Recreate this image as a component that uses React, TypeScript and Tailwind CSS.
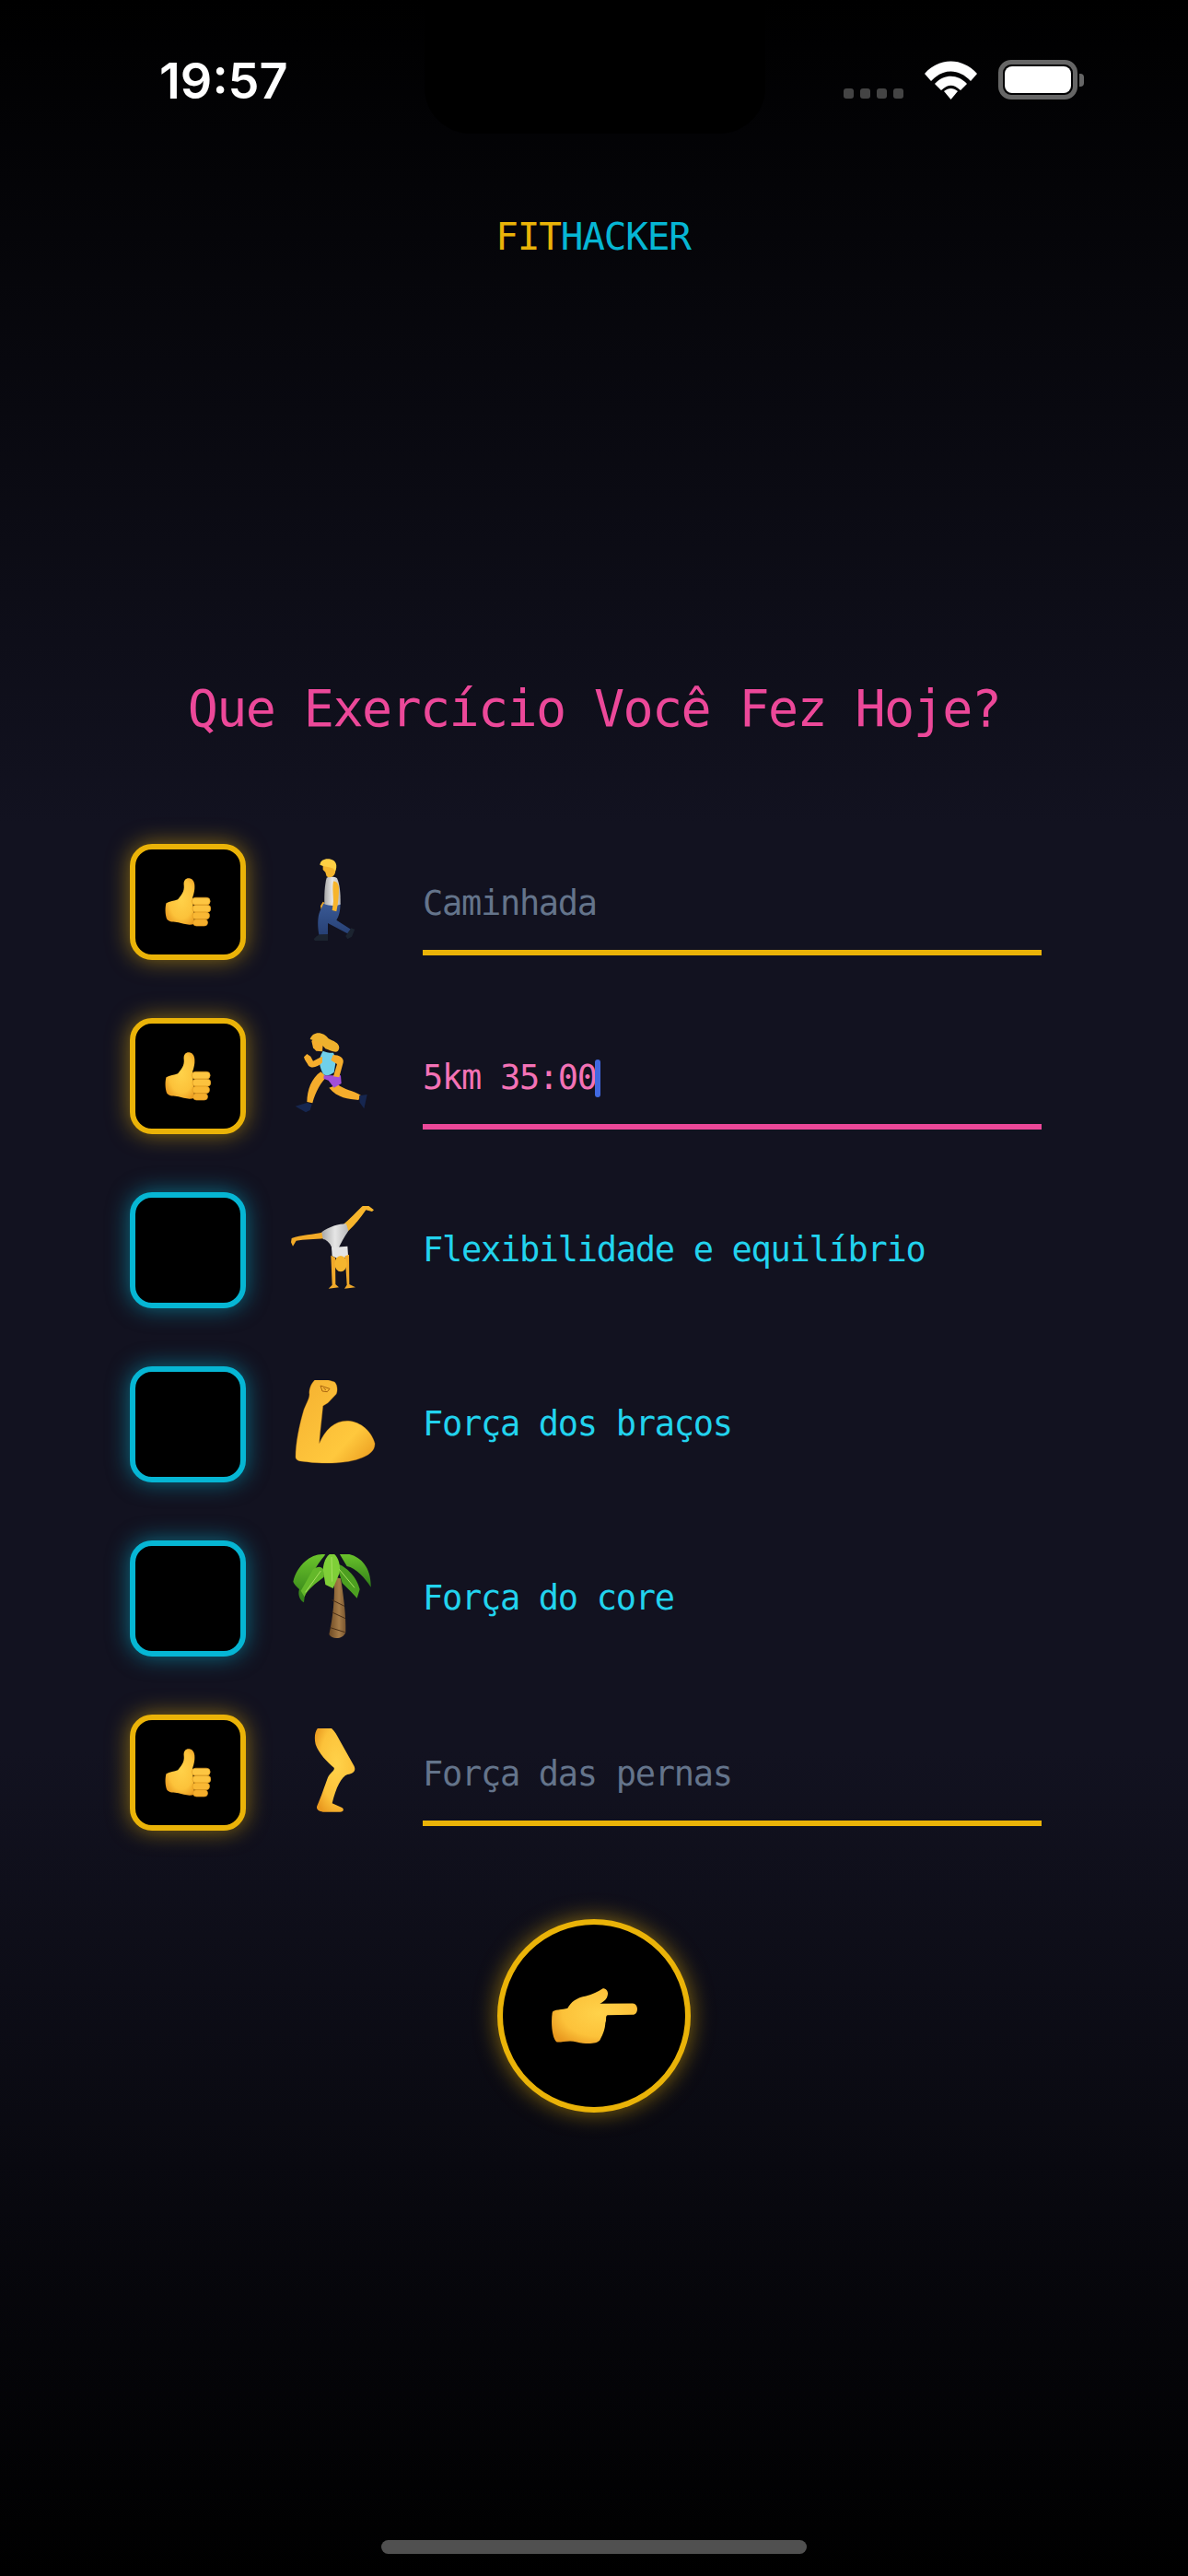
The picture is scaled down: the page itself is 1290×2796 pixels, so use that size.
const mono = "font-['DejaVu_Sans_Mono',monospace]";

function Defs() {
  return (
    <svg width="0" height="0" className="absolute">
      <defs>
        <radialGradient id="skin" cx="0.55" cy="0.45" r="0.65">
          <stop offset="0" stopColor="#ffd24a" />
          <stop offset="0.65" stopColor="#fcc23a" />
          <stop offset="1" stopColor="#e9991f" />
        </radialGradient>
        <linearGradient id="arm" x1="0" y1="0" x2="1" y2="1">
          <stop offset="0" stopColor="#f5b030" />
          <stop offset="0.7" stopColor="#ffc83d" />
          <stop offset="1" stopColor="#e8981c" />
        </linearGradient>
        <linearGradient id="trunk" x1="0" y1="0" x2="1" y2="0">
          <stop offset="0" stopColor="#6e4a24" />
          <stop offset="0.6" stopColor="#a67c48" />
          <stop offset="1" stopColor="#7a5630" />
        </linearGradient>
        <linearGradient id="leaf" x1="0" y1="0" x2="0" y2="1">
          <stop offset="0" stopColor="#6cc52c" />
          <stop offset="1" stopColor="#2f7d18" />
        </linearGradient>
        <linearGradient id="tee" x1="0" y1="0" x2="1" y2="0">
          <stop offset="0" stopColor="#a8a8a8" />
          <stop offset="0.5" stopColor="#e6e6e6" />
          <stop offset="1" stopColor="#b8b8b8" />
        </linearGradient>
        <linearGradient id="jeans" x1="0" y1="0" x2="0" y2="1">
          <stop offset="0" stopColor="#3a5a96" />
          <stop offset="1" stopColor="#263f73" />
        </linearGradient>
      </defs>
    </svg>
  );
}

// all drawings below are in 1/3 px units, 3x the size on screen
function Thumb() {
  return (
    <svg viewBox="0 0 150 160" className="w-[50px] h-[53px]">
      <path d="M4 82 C14 76 32 74 42 70 C54 56 64 44 62 24 C60 8 68 0 80 1 C94 3 99 18 97 36 C96 48 92 58 90 66 L96 150 C80 157 60 150 44 146 C30 142 14 146 6 134 C0 118 0 96 4 82Z" fill="url(#skin)" />
      <rect x="88" y="64" width="60" height="24" rx="12" fill="#fdc642" stroke="#e09a20" strokeWidth="2" />
      <rect x="90" y="88" width="60" height="24" rx="12" fill="#fcc23e" stroke="#e09a20" strokeWidth="2" />
      <rect x="90" y="112" width="56" height="23" rx="11" fill="#f9b834" stroke="#e09a20" strokeWidth="2" />
      <rect x="92" y="135" width="48" height="22" rx="11" fill="#f5ae2c" stroke="#e09a20" strokeWidth="2" />
    </svg>
  );
}

function Walker() {
  return (
    <svg viewBox="585 93 288 288" className="w-[96px] h-[96px]">
      <path d="M684 250 L692 236 L698 240 L692 262 L686 262Z" fill="#eeaa2a" />
      <path d="M694 242 L748 240 C750 262 744 285 736 296 L783 326 L772 340 L708 306 L708 348 L680 348 C674 320 674 285 682 268Z" fill="url(#jeans)" />
      <path d="M662 358 C668 350 676 346 680 343 L708 342 L708 363 L666 363Z" fill="#1c2430" />
      <path d="M766 348 L784 322 L796 326 L786 350 L772 358Z" fill="#1c2430" />
      <path d="M704 158 C715 152 732 154 738 160 C746 175 750 210 749 245 C735 250 712 250 697 244 C696 210 698 180 704 158Z" fill="url(#tee)" />
      <path d="M726 170 C736 168 744 180 744 192 C744 215 742 240 736 268 L722 264 L726 235 C726 215 722 190 726 170Z" fill="#f7b52c" />
      <path d="M692 118 L734 120 L732 142 C728 158 712 160 704 154 L700 140 L692 132Z" fill="#f5b52e" />
      <path d="M682 116 C684 100 700 94 718 98 C736 102 740 120 732 138 L726 128 C712 122 695 122 682 116Z" fill="#ffd044" />
    </svg>
  );
}

function Runner() {
  return (
    <svg viewBox="585 660 288 288" className="w-[96px] h-[96px]">
      <path d="M704 806 C686 825 668 852 658 892 L640 888 C640 850 655 810 685 790Z" fill="#f5ad2c" />
      <path d="M740 832 C762 848 790 852 815 866 L808 882 C775 878 740 876 712 842Z" fill="#f5ad2c" />
      <path d="M602 902 L642 890 L656 896 L650 915 L636 922 Z" fill="#16264f" />
      <path d="M810 868 L836 864 L826 910 L812 890Z" fill="#16264f" />
      <path d="M695 802 L750 802 L752 828 L728 842 L710 818 L694 812Z" fill="#a24fd8" />
      <path d="M692 722 C700 726 718 730 726 728 L735 750 L728 792 C715 802 700 806 692 796 C680 770 675 750 692 722Z" fill="#6fd0ea" />
      <path d="M690 760 C675 775 655 780 645 770 C640 760 632 752 630 742 L640 732 L652 740 L660 755 L680 745 L690 740Z" fill="#f5ad2c" />
      <path d="M725 735 C745 735 762 745 758 760 L745 808 L726 805 L738 765 L718 752Z" fill="#f5ad2c" />
      <path d="M655 690 C662 680 685 680 692 700 L690 724 L670 722 L660 712Z" fill="#f5ad2c" />
      <path d="M650 684 C660 655 695 660 710 682 C725 690 745 695 745 712 C742 735 720 722 700 715 C690 700 670 690 650 684Z" fill="#eeb12d" />
    </svg>
  );
}

function Cartwheel() {
  return (
    <svg viewBox="585 87 288 288" className="w-[96px] h-[96px]">
      <path d="M590 192 C620 182 660 180 695 172 L698 192 C665 196 630 196 605 200 L594 218 L588 205Z" fill="#f2aa28" />
      <path d="M755 150 C780 130 800 108 820 88 L835 82 L858 100 L852 105 L832 100 C815 125 795 150 775 168Z" fill="#f7b52c" />
      <path d="M688 172 C710 155 745 145 768 145 L775 168 C760 190 750 210 742 225 L722 225 C715 205 700 195 692 195Z" fill="url(#tee)" />
      <path d="M720 222 L772 218 L774 250 L748 262 L722 250Z" fill="#e4e4e4" />
      <path d="M718 248 L732 255 L733 342 L744 352 L710 356 L722 344Z" fill="#f0a92a" />
      <path d="M764 250 L777 245 L778 342 L798 352 L762 356 L770 344Z" fill="#f0a92a" />
      <ellipse cx="750" cy="275" rx="20" ry="26" fill="#f5b52e" />
    </svg>
  );
}

function Arm() {
  return (
    <svg viewBox="585 654 288 288" className="w-[96px] h-[96px]">
      <path d="M680 645 L730 660 C740 670 740 690 735 700 L708 728 L692 738 C688 780 682 830 680 860 C700 815 730 785 775 787 C815 790 850 820 861 860 C862 885 840 900 810 910 C770 925 700 928 640 920 C620 918 605 918 603 905 C603 860 615 800 630 750 C640 725 648 715 648 700 C645 680 660 650 680 645Z" fill="url(#arm)" stroke="#dd9118" strokeWidth="1" />
      <path d="M684 672 L714 682 L706 692 L690 690Z M694 680 L702 686" fill="none" stroke="#a86410" strokeWidth="3" />
    </svg>
  );
}

function Palm() {
  return (
    <svg viewBox="585 111 288 288" className="w-[96px] h-[96px]">
      <path d="M728 185 L750 190 C758 240 768 310 766 365 C758 388 722 390 712 372 C724 320 732 250 728 185Z" fill="url(#trunk)" />
      <path d="M722 260 L762 280 M722 300 L765 320 M716 350 L764 365" stroke="#4a2f16" strokeWidth="3" fill="none" />
      <path d="M595 200 C610 140 660 105 700 112 C670 150 640 190 630 268 C615 260 610 240 615 225 C605 215 598 208 595 200Z" fill="url(#leaf)" />
      <path d="M745 108 C800 105 850 140 848 218 C830 190 800 155 770 150Z" fill="url(#leaf)" />
      <path d="M735 140 C770 150 805 190 812 225 L803 254 L785 235 L755 205Z" fill="#4c9f20" />
      <path d="M660 160 C680 145 700 150 695 185 C670 205 640 225 632 250 L620 230 Z" fill="#64b82a" />
      <path d="M722 105 C745 120 750 150 745 175 L725 222 L700 210 L692 160 C695 130 705 115 722 105Z" fill="#7fcf38" />
      <path d="M720 120 L722 200 M745 160 L795 220 M685 165 L635 235" stroke="#a8e060" strokeWidth="3" fill="none" />
    </svg>
  );
}

function Leg() {
  return (
    <svg viewBox="585 678 288 288" className="w-[96px] h-[96px]">
      <path d="M695 668 C718 668 732 688 747 718 L792 798 C802 815 792 826 772 828 C752 834 734 872 722 922 L754 936 C763 942 758 950 748 950 L692 950 C676 948 668 940 674 928 C686 902 698 864 708 838 C716 822 732 814 728 806 C706 788 678 760 668 730 C660 695 672 668 695 668Z" fill="url(#skin)" />
    </svg>
  );
}

function Pointer() {
  return (
    <svg viewBox="285 312 285 188" className="w-[95px] h-[63px]">
      <path d="M290 395 C292 382 325 386 340 380 C350 360 370 345 400 340 C420 335 440 325 455 315 C470 315 475 330 468 345 C462 356 450 362 445 365 L552 364 C572 365 572 400 552 401 L470 402 C462 405 468 415 463 428 C462 445 458 460 445 484 C435 497 400 497 370 490 C345 482 320 492 305 490 C290 480 285 430 290 395Z" fill="url(#skin)" />
    </svg>
  );
}

function Wifi() {
  return (
    <svg viewBox="0 0 57 42" className="w-[57px] h-[42px]">
      <path d="M0 14 C16 -4 41 -4 57 14 L50 22 C37 8 20 8 7 22Z" fill="#fff" />
      <path d="M11 25 C21 14 36 14 46 25 L39 32 C31 25 26 25 18 32Z" fill="#fff" />
      <path d="M21 33 C26 29 31 29 36 33 L28.5 42Z" fill="#fff" />
    </svg>
  );
}

type Item = { icon: React.ReactNode; label: string; done?: boolean; focus?: boolean };

const items: Item[] = [
  { icon: <Walker />, label: 'Caminhada', done: true },
  { icon: <Runner />, label: '5km 35:00', done: true, focus: true },
  { icon: <Cartwheel />, label: 'Flexibilidade e equilíbrio' },
  { icon: <Arm />, label: 'Força dos braços' },
  { icon: <Palm />, label: 'Força do core' },
  { icon: <Leg />, label: 'Força das pernas', done: true },
];

function Row({ item }: { item: Item }) {
  return (
    <div className="flex items-center gap-[48px] w-[990px]">
      {item.done ? (
        <div className="w-[126px] h-[126px] flex items-center justify-center rounded-[24px] border-[6px] border-[#eab308] bg-black shadow-[0_0_24px_#eab30890]">
          <Thumb />
        </div>
      ) : (
        <div className="w-[126px] h-[126px] rounded-[24px] border-[6px] border-[#06b6d4] bg-black shadow-[0_0_24px_#06b6d490]" />
      )}
      {item.icon}
      {item.done ? (
        <div className="flex-1 h-[126px] flex items-end pb-[5px]">
          <div className={`w-full h-[106px] flex items-center border-b-[6px] ${item.focus ? 'border-[#ec4899] text-[#f472b6]' : 'border-[#eab308] text-[#64748b]'}`}>
            <span className="text-[37px] tracking-[-1.3px]">{item.label}</span>
            {item.focus && <span className="-ml-[2px] w-[6px] h-[41px] rounded-[3px] bg-[#4169e1]" />}
          </div>
        </div>
      ) : (
        <span className="flex-1 text-[37px] tracking-[-1.3px] text-[#22d3ee]">{item.label}</span>
      )}
    </div>
  );
}

export default function App() {
  return (
    <div className={`relative min-h-[2796px] flex flex-col items-center bg-[linear-gradient(to_bottom,#000_0%,#121220_32%,#121220_68%,#000_100%)] ${mono}`}>
      <Defs />
      {/* notch */}
      <div className="absolute top-0 left-[461px] w-[370px] h-[145px] rounded-b-[50px] bg-black" />

      {/* status bar */}
      <div className="relative w-full h-[232px] flex justify-between items-start pl-[173px] pr-[113px] pt-[61px]">
        <span className="font-['Inter',sans-serif] font-semibold text-[54px] leading-[54px] text-white">19:57</span>
        <div className="flex items-end gap-[23px] pt-[4px]">
          <div className="flex gap-[7px] mb-[1px]">
            <span className="w-[11px] h-[11px] rounded-[3px] bg-[#444]" />
            <span className="w-[11px] h-[11px] rounded-[3px] bg-[#444]" />
            <span className="w-[11px] h-[11px] rounded-[3px] bg-[#444]" />
            <span className="w-[11px] h-[11px] rounded-[3px] bg-[#444]" />
          </div>
          <Wifi />
          <div className="flex items-center gap-[2px]">
            <div className="w-[86px] h-[43px] rounded-[14px] border-[5px] border-[#666] p-[2px]">
              <div className="w-full h-full rounded-[8px] bg-white" />
            </div>
            <div className="w-[5px] h-[14px] rounded-r-[4px] bg-[#666]" />
          </div>
        </div>
      </div>

      <div className="h-[50px] pt-[2px] pr-[2px] flex items-center text-[41px] tracking-[-1.2px]">
        <span className="text-[#eab308]">FIT</span>
        <span className="text-[#06b6d4]">HACKER</span>
      </div>

      <h1 className="mt-[452px] h-[70px] flex items-center font-normal text-[55px] tracking-[-1.6px] text-[#ec4899]">
        Que Exercício Você Fez Hoje?
      </h1>

      <div className="mt-[112px] self-start ml-[141px] flex flex-col gap-[63px]">
        {items.map((item) => (
          <Row key={item.label} item={item} />
        ))}
      </div>

      <button className="mt-[96px] w-[210px] h-[210px] flex items-center justify-center rounded-full border-[6px] border-[#eab308] bg-black shadow-[0_0_24px_#eab30890]">
        <Pointer />
      </button>

      <div className="mt-auto mb-[24px] w-[462px] h-[15px] rounded-full bg-[#505050]" />
    </div>
  );
}
